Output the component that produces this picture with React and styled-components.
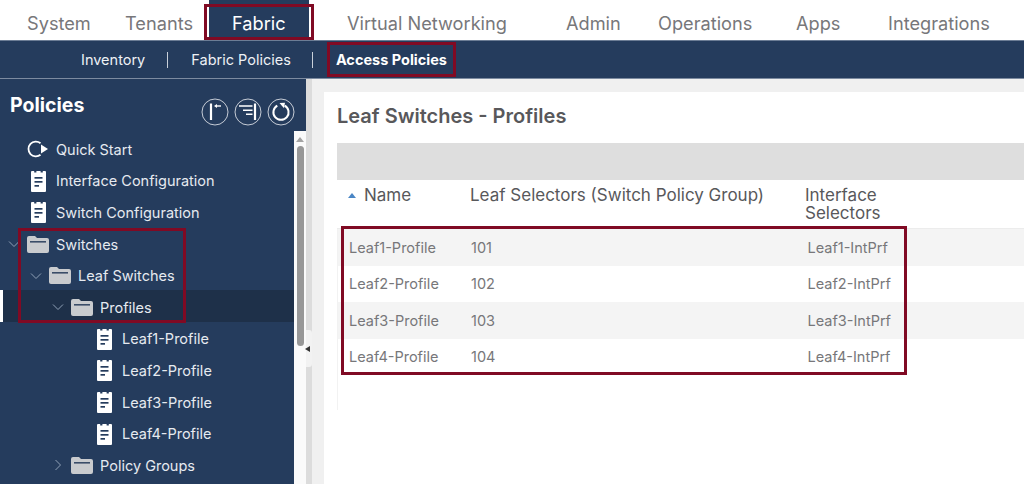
import React from "react";
import styled, { createGlobalStyle } from "styled-components";

const Global = createGlobalStyle`
  html, body { margin: 0; padding: 0; background: #fff; overflow: hidden; }
  * { box-sizing: border-box; }
  body { font-family: Inter, "Noto Sans", sans-serif; }
`;

const Page = styled.div`
  position: relative;
  width: 1024px;
  height: 484px;
  overflow: hidden;
  display: flex;
  flex-direction: column;
`;

const TopNav = styled.nav`
  height: 40px;
  flex: none;
  display: flex;
  padding-left: 27px;
  background: #fff;
`;

const Tab = styled.div`
  width: ${(p) => p.$w}px;
  margin-left: ${(p) => p.$ml || 0}px;
  padding-left: ${(p) => p.$pl || 0}px;
  padding-top: 4px;
  font-size: 18.2px;
  line-height: 38px;
  color: ${(p) => (p.$active ? "#fff" : "#77777a")};
  background: ${(p) => (p.$active ? "#253c5d" : "transparent")};
  white-space: nowrap;
`;

const SubNav = styled.nav`
  height: 39px;
  flex: none;
  display: flex;
  align-items: center;
  padding-left: 81px;
  background: #253c5d;
  border-top: 1px solid #6c7d95;
  border-bottom: 1px solid #7d8ba0;
  font-size: 14.5px;
  color: #eef1f5;
`;

const SubItem = styled.span`
  font-weight: ${(p) => (p.$bold ? 700 : 400)};
  color: ${(p) => (p.$bold ? "#fff" : "#eef1f5")};
  white-space: nowrap;
`;

const SubSep = styled.span`
  width: 1px;
  height: 16px;
  margin: 0 ${(p) => p.$r}px 0 ${(p) => p.$l}px;
  background: #c9d0da;
`;

const Body = styled.div`
  flex: 1;
  min-height: 0;
  display: flex;
`;

const Sidebar = styled.aside`
  width: 306px;
  flex: none;
  position: relative;
  background: #253c5d;
  display: flex;
  flex-direction: column;
`;

const SideHead = styled.div`
  height: 53px;
  flex: none;
  display: flex;
  align-items: flex-start;
  justify-content: space-between;
  padding: 14px 11px 0 10px;
`;

const SideTitle = styled.h2`
  margin: 0;
  font-size: 19.5px;
  line-height: 24px;
  font-weight: 700;
  color: #fff;
`;

const Tools = styled.div`
  display: flex;
  gap: 5px;
  margin-top: 5px;
`;

const TreeArea = styled.div`
  flex: 1;
  min-height: 0;
  display: flex;
`;

const Tree = styled.div`
  flex: 1;
  min-width: 0;
`;

const Row = styled.div`
  height: 31.6px;
  display: flex;
  align-items: center;
  padding-top: 3px;
  padding-left: ${(p) => 6 + p.$level * 22}px;
  background: ${(p) => (p.$selected ? "#1e3049" : "transparent")};
  box-shadow: ${(p) => (p.$selected ? "inset 3px 0 0 #fff" : "none")};
  color: #e6eaf0;
  font-size: 14.5px;
  white-space: nowrap;
`;

const Chevron = styled.span`
  width: 21px;
  flex: none;
  display: flex;
  align-items: center;
  padding-left: 2px;
`;

const IconBox = styled.span`
  width: 22px;
  height: 24px;
  flex: none;
  margin-right: 7px;
  display: flex;
  align-items: center;
  justify-content: center;
`;

const Scrollbar = styled.div`
  width: 12px;
  flex: none;
  margin-top: -1px;
  background: #fafafa;
  display: flex;
  flex-direction: column;
  align-items: center;
  padding-top: 6px;
`;

const ScrollArrow = styled.div`
  width: 0;
  height: 0;
  border-left: 4px solid transparent;
  border-right: 4px solid transparent;
  border-bottom: 5px solid #a3a3a3;
`;

const ScrollThumb = styled.div`
  width: 7px;
  height: 200px;
  margin-top: 4px;
  border-radius: 4px;
  background: #979797;
`;

const Splitter = styled.div`
  width: 6px;
  flex: none;
  position: relative;
  background: #dcdcdc;
`;

const SplitHandle = styled.div`
  position: absolute;
  left: 0;
  top: 251px;
  width: 6px;
  height: 37px;
  background: #f2f2f2;
  border-radius: 0 3px 3px 0;
  display: flex;
  align-items: center;
  &::before {
    content: "";
    margin-left: -1px;
    border-top: 3px solid transparent;
    border-bottom: 3px solid transparent;
    border-right: 5px solid #333;
  }
`;

const Content = styled.main`
  flex: 1;
  min-width: 0;
  background: #f0f0f0;
  padding: 13px 0 0 12px;
`;

const Panel = styled.section`
  height: 100%;
  background: #fff;
  padding: 12px 0 0 13px;
`;

const Title = styled.h1`
  margin: 0;
  height: 39px;
  font-size: 20px;
  line-height: 24px;
  font-weight: 600;
  color: #58585b;
`;

const GrayBar = styled.div`
  height: 37px;
  background: #dedede;
`;

const TableRow = styled.div`
  display: grid;
  grid-template-columns: 133px 335px 1fr;
  align-items: ${(p) => (p.$head ? "start" : "center")};
`;

const HeadRow = styled(TableRow)`
  height: 49px;
  padding-top: 6px;
  border-bottom: 1px solid #ececec;
  font-size: 17px;
  line-height: 18px;
  color: #58585b;
`;

const HeadCell = styled.div`
  display: flex;
  align-items: center;
  padding-left: ${(p) => p.$pl}px;
`;

const SortUp = styled.span`
  width: 0;
  height: 0;
  margin-right: 8px;
  border-left: 4px solid transparent;
  border-right: 4px solid transparent;
  border-bottom: 5px solid #4a86c5;
`;

const TableBody = styled.div`
  height: 181px;
  border-left: 1px solid #f2f2f2;
`;

const DataRow = styled(TableRow)`
  height: 36.5px;
  background: ${(p) => (p.$alt ? "#f4f4f4" : "#fff")};
  font-size: 14.5px;
  color: #77777a;
`;

const Cell = styled.div`
  padding-left: ${(p) => p.$pl}px;
`;

const Mark = styled.div`
  position: absolute;
  left: ${(p) => p.$x}px;
  top: ${(p) => p.$y}px;
  width: ${(p) => p.$w}px;
  height: ${(p) => p.$h}px;
  border: 3px solid #800a24;
  pointer-events: none;
`;

const ChevronIcon = ({ dir }) => (
  <svg width="12" height="12" viewBox="0 0 12 12" fill="none" stroke="#8fa0b6" strokeWidth="1">
    {dir === "down" ? <path d="M1 3.5 L6 8.5 L11 3.5" /> : <path d="M3.5 1 L8.5 6 L3.5 11" />}
  </svg>
);

const FolderIcon = () => (
  <svg width="22" height="17" viewBox="0 0 22 17">
    <path d="M0 2 Q0 0 2 0 H8 L10 2 H20 Q22 2 22 4 V15 Q22 17 20 17 H2 Q0 17 0 15 Z" fill="#c9cbce" />
    <rect x="3" y="5" width="16" height="1.6" fill="#3a4d68" />
  </svg>
);

const DocIcon = () => (
  <svg width="15" height="22" viewBox="0 0 15 22">
    <path d="M1 1 H3.2 V2.6 H5.4 V1 H9.6 V2.6 H11.8 V1 H14 Q15 1 15 2 V21 Q15 22 14 22 H1 Q0 22 0 21 V2 Q0 1 1 1 Z" fill="#fff" />
    <rect x="3.5" y="7" width="8" height="1.7" fill="#253c5d" />
    <rect x="3.5" y="11" width="8" height="1.7" fill="#253c5d" />
    <rect x="3.5" y="15" width="4.5" height="1.7" fill="#253c5d" />
  </svg>
);

const QuickIcon = () => (
  <svg width="22" height="18" viewBox="0 0 22 18" fill="none">
    <path d="M13.5 3.2 A7.4 7.4 0 1 0 13.5 14.8" stroke="#fff" strokeWidth="1.8" />
    <path d="M14 4.5 L21 9 L14 13.5 Z" fill="#fff" />
  </svg>
);

const ToolIcon = ({ children }) => (
  <svg width="28" height="28" viewBox="0 0 28 28" fill="none" stroke="#fff">
    <circle cx="14" cy="14" r="13" stroke="#c6ccd6" strokeWidth="1" />
    {children}
  </svg>
);

const tree = [
  { label: "Quick Start", level: 0, icon: "quick" },
  { label: "Interface Configuration", level: 0, icon: "doc" },
  { label: "Switch Configuration", level: 0, icon: "doc" },
  { label: "Switches", level: 0, icon: "folder", chev: "down" },
  { label: "Leaf Switches", level: 1, icon: "folder", chev: "down" },
  { label: "Profiles", level: 2, icon: "folder", chev: "down", selected: true },
  { label: "Leaf1-Profile", level: 3, icon: "doc" },
  { label: "Leaf2-Profile", level: 3, icon: "doc" },
  { label: "Leaf3-Profile", level: 3, icon: "doc" },
  { label: "Leaf4-Profile", level: 3, icon: "doc" },
  { label: "Policy Groups", level: 2, icon: "folder", chev: "right" },
];

const icons = { quick: QuickIcon, doc: DocIcon, folder: FolderIcon };

const tabs = [
  { t: "System", w: 98 },
  { t: "Tenants", w: 84 },
  { t: "Fabric", w: 100, pl: 23, active: true },
  { t: "Virtual Networking", w: 219, ml: 38 },
  { t: "Admin", w: 92 },
  { t: "Operations", w: 138 },
  { t: "Apps", w: 92 },
  { t: "Integrations", w: 110 },
];

const rows = [1, 2, 3, 4];

export default function App() {
  return (
    <Page>
      <Global />
      <TopNav>
        {tabs.map((x) => (
          <Tab key={x.t} $w={x.w} $ml={x.ml} $pl={x.pl} $active={x.active}>
            {x.t}
          </Tab>
        ))}
      </TopNav>
      <SubNav>
        <SubItem>Inventory</SubItem>
        <SubSep $l={22} $r={23} />
        <SubItem>Fabric Policies</SubItem>
        <SubSep $l={21} $r={23} />
        <SubItem $bold>Access Policies</SubItem>
      </SubNav>
      <Body>
        <Sidebar>
          <SideHead>
            <SideTitle>Policies</SideTitle>
            <Tools>
              <ToolIcon>
                <path d="M10 5.5 V22" strokeWidth="2.2" />
                <path d="M15 8 H20" strokeWidth="1.4" />
                <path d="M13 8 L16 6 V10 Z" fill="#fff" stroke="none" />
              </ToolIcon>
              <ToolIcon>
                <path d="M21 5.5 V22" strokeWidth="2.2" />
                <path d="M5 8 H18.5 M9 12.3 H18.5 M12 16.3 H18.5" strokeWidth="1.4" />
              </ToolIcon>
              <ToolIcon>
                <path d="M17.7 7.6 A7.6 7.6 0 1 1 10.3 7.6" strokeWidth="2" />
                <path d="M12.5 5 L18 4.8 L17 10.2 Z" fill="#fff" stroke="none" />
              </ToolIcon>
            </Tools>
          </SideHead>
          <TreeArea>
            <Tree>
              {tree.map((n) => {
                const Icon = icons[n.icon];
                return (
                  <Row key={n.label} $level={n.level} $selected={n.selected}>
                    <Chevron>{n.chev && <ChevronIcon dir={n.chev} />}</Chevron>
                    <IconBox>
                      <Icon />
                    </IconBox>
                    {n.label}
                  </Row>
                );
              })}
            </Tree>
            <Scrollbar>
              <ScrollArrow />
              <ScrollThumb />
            </Scrollbar>
          </TreeArea>
        </Sidebar>
        <Splitter>
          <SplitHandle />
        </Splitter>
        <Content>
          <Panel>
            <Title>Leaf Switches - Profiles</Title>
            <GrayBar />
            <HeadRow $head>
              <HeadCell $pl={11}>
                <SortUp />
                Name
              </HeadCell>
              <Cell>Leaf Selectors (Switch Policy Group)</Cell>
              <Cell>
                Interface
                <br />
                Selectors
              </Cell>
            </HeadRow>
            <TableBody>
              {rows.map((i) => (
                <DataRow key={i} $alt={i % 2 === 1}>
                  <Cell $pl={11}>{`Leaf${i}-Profile`}</Cell>
                  <Cell>{100 + i}</Cell>
                  <Cell $pl={1.5}>{`Leaf${i}-IntPrf`}</Cell>
                </DataRow>
              ))}
            </TableBody>
          </Panel>
        </Content>
      </Body>
      <Mark $x={204} $y={4} $w={110} $h={36} />
      <Mark $x={327} $y={42} $w={129} $h={35} />
      <Mark $x={18} $y={228} $w={168} $h={95} />
      <Mark $x={341} $y={226} $w={566} $h={149} />
    </Page>
  );
}
